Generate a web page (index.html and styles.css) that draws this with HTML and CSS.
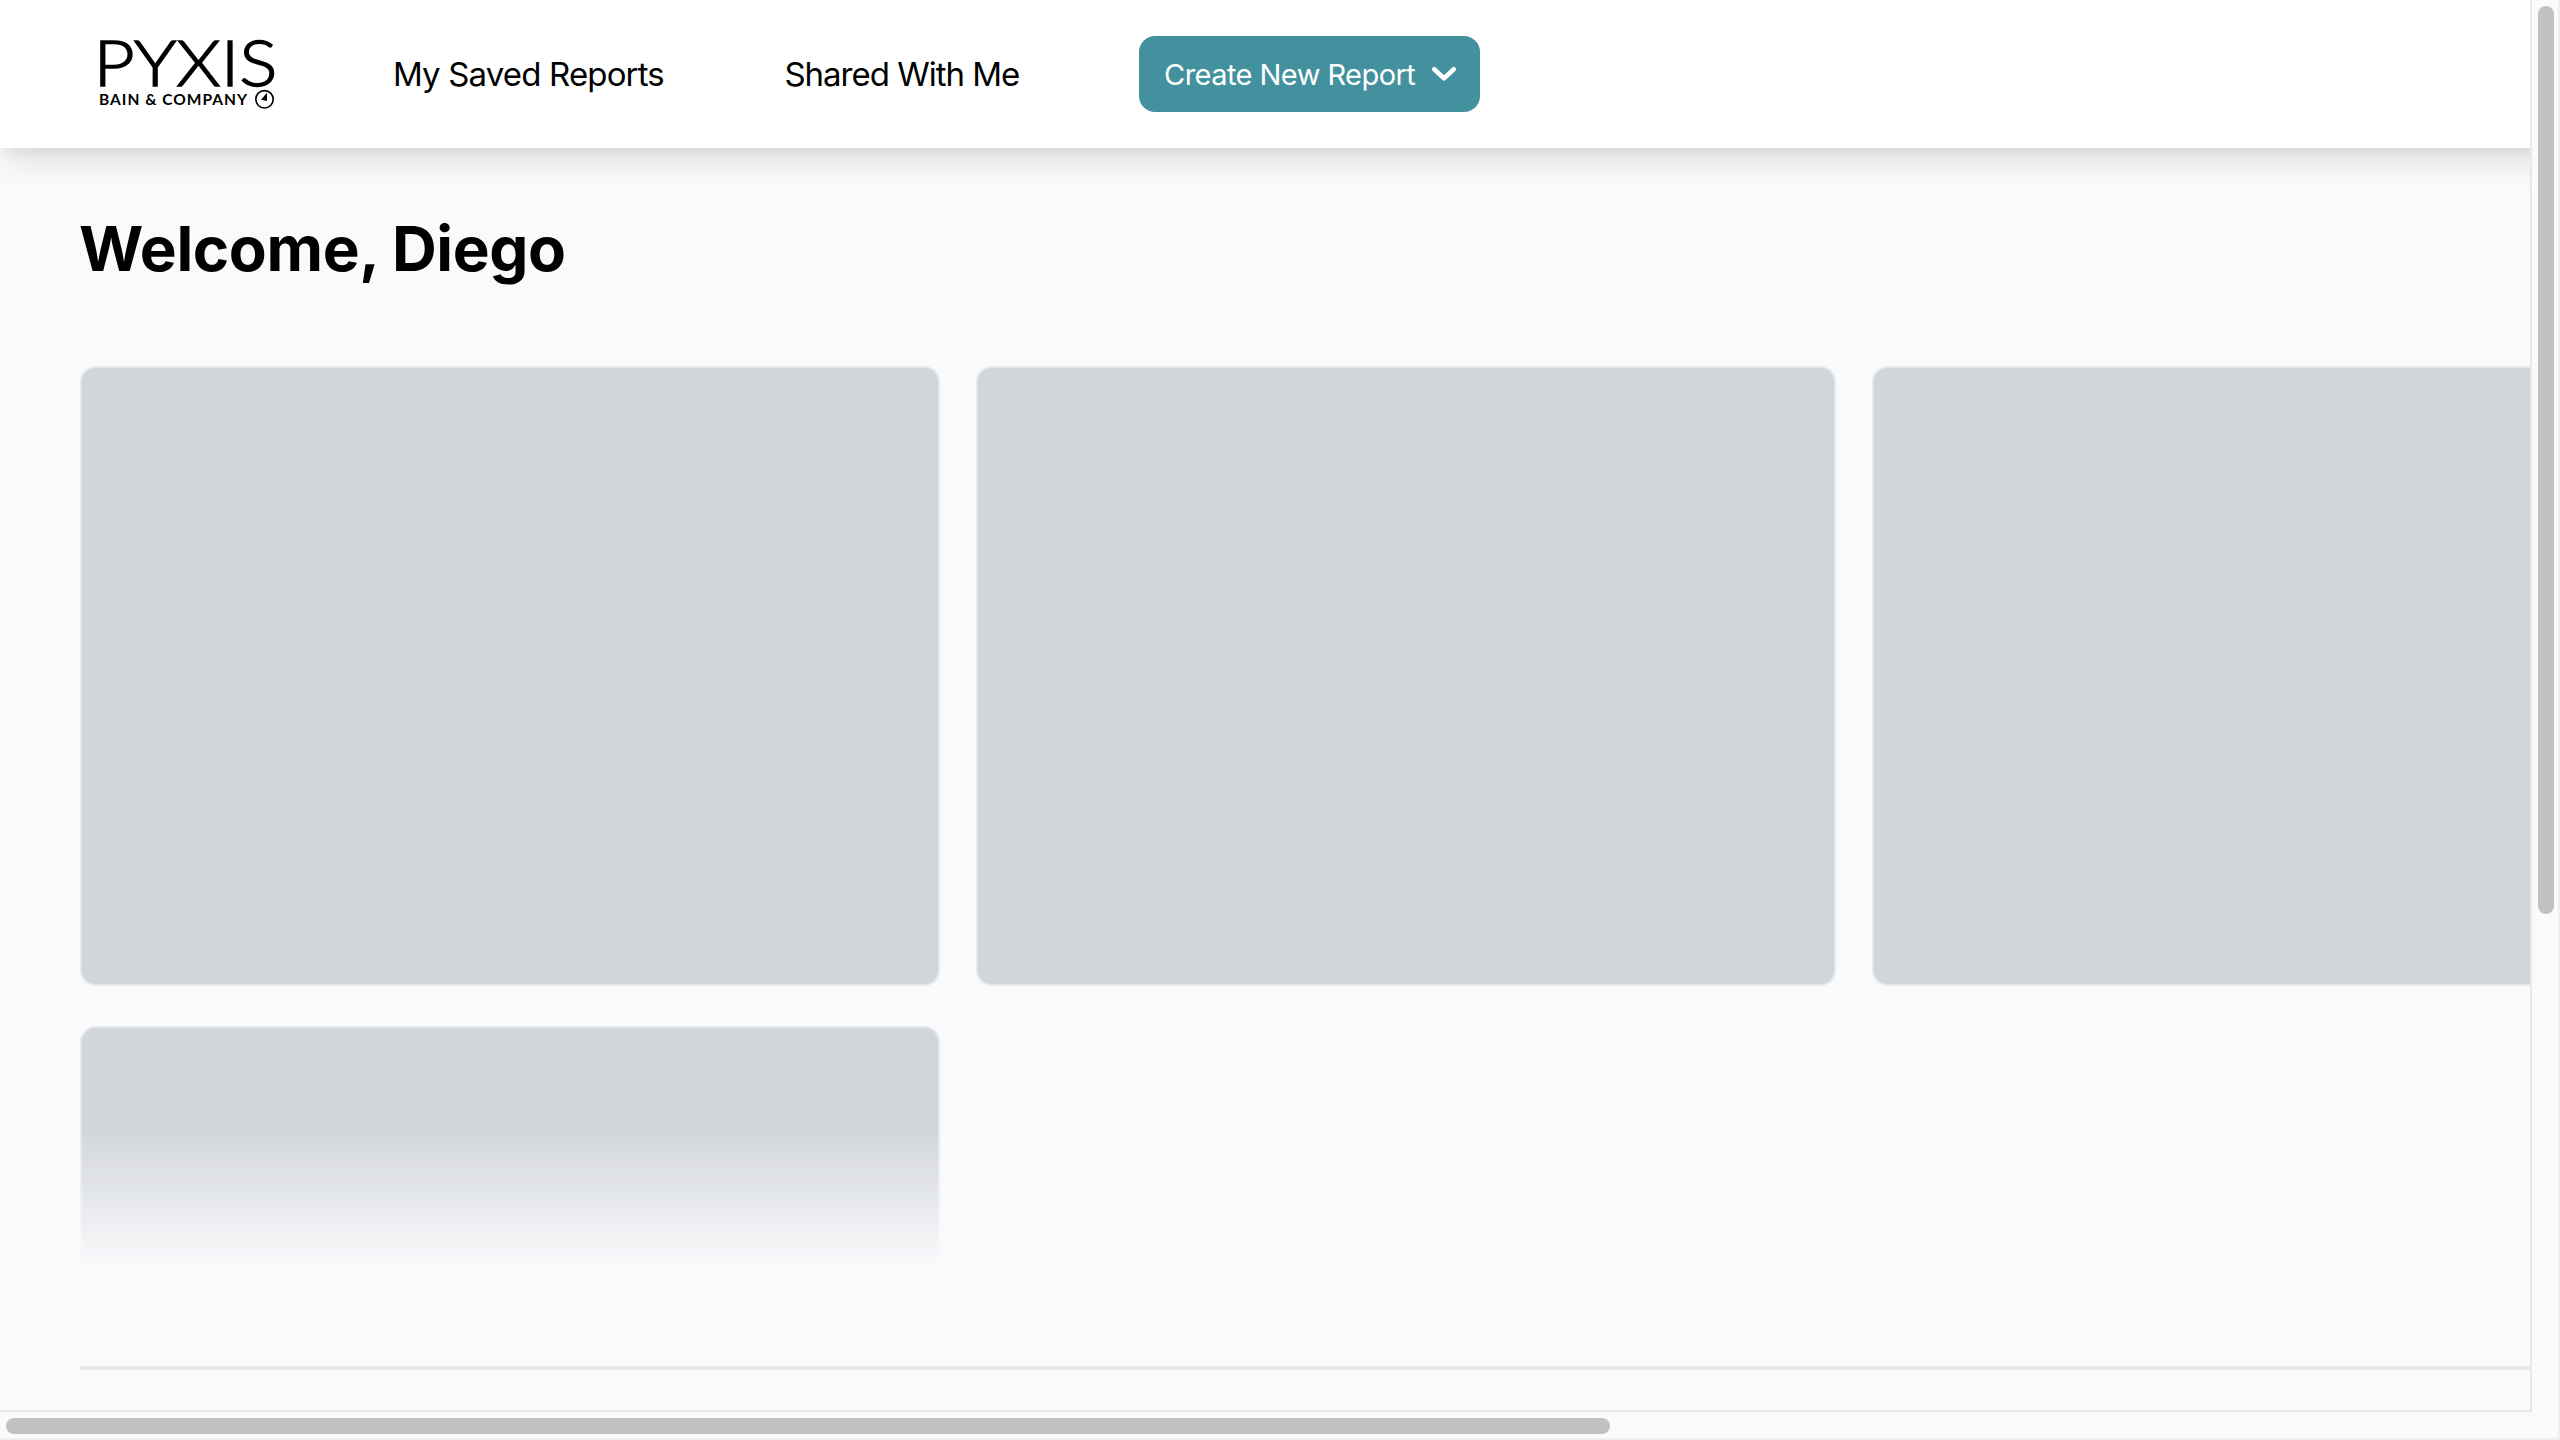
FILE: index.html
```html
<!DOCTYPE html>
<html lang="en">
<head>
<meta charset="utf-8">
<title>Pyxis</title>
<link rel="stylesheet" href="styles.css">
</head>
<body>
<div class="window">
  <div class="viewport">
    <header class="topbar">
      <svg class="logo" viewBox="0 0 180 76" role="img" aria-label="Pyxis, Bain &amp; Company">
        <text class="logo-name" x="-6.500" y="49.500" textLength="184" lengthAdjust="spacingAndGlyphs">PYXIS</text>
        <text class="logo-owner" x="-1" y="69" textLength="148" lengthAdjust="spacing">BAIN &amp; COMPANY</text>
        <circle class="logo-ring" cx="164.5" cy="63.3" r="8.7"/>
        <path class="logo-needle" d="M167 56.8V65l-6-1.2z"/>
      </svg>
      <nav class="nav">
        <a class="nav-link nav-saved">My Saved Reports</a>
        <a class="nav-link nav-shared">Shared With Me</a>
      </nav>
      <button class="create" type="button">
        <span class="create-label">Create New Report</span>
        <svg class="chevron" viewBox="0 0 24 14"><path d="M2.2 2.2L12 11.4l9.800-9.200"/></svg>
      </button>
    </header>
    <main class="content">
      <h1 class="welcome">Welcome, Diego</h1>
      <section class="cards">
        <div class="card"></div>
        <div class="card"></div>
        <div class="card"></div>
        <div class="card"></div>
      </section>
      <hr class="rule">
    </main>
  </div>
  <div class="track track-y"><div class="thumb thumb-y"></div></div>
  <div class="track track-x"><div class="thumb thumb-x"></div></div>
  <div class="corner"></div>
</div>
</body>
</html>
```
FILE: styles.css
```css
* { box-sizing: border-box; }
body { margin: 0; background: #fafafa; font-family: Inter, "Liberation Sans", sans-serif; color: #000; overflow: hidden; }
.window { width: 2560px; height: 1440px; display: grid; grid-template-columns: 2530px 30px; grid-template-rows: 1410px 30px; overflow: hidden; }
.viewport { overflow: hidden; background: #f9fafc; }

.topbar { position: relative; width: 2800px; height: 148px; padding-left: 100px; display: flex; align-items: center; background: #fff; box-shadow: 0 20px 30px -6px rgba(0, 0, 0, .1), 0 8px 12px -4px rgba(0, 0, 0, .06); }
.logo { width: 180px; height: 76px; flex: none; overflow: visible; }
.logo-name { font: 300 64px Lato, sans-serif; stroke: #000; stroke-width: 1.400; }
.logo-owner { font: 700 15.500px Lato, sans-serif; }
.logo-ring { fill: none; stroke: #000; stroke-width: 1.600; }
.nav { display: flex; gap: 120.500px; margin-left: 113px; width: 746px; }
.nav-link { font-size: 33px; line-height: 44px; white-space: nowrap; }
.nav-saved { letter-spacing: -.85px; }
.nav-shared { letter-spacing: -1px; }
.create { width: 341px; height: 76px; padding: 0 24px 0 25px; display: flex; align-items: center; justify-content: space-between; border: 0; border-radius: 16px; background: #43919e; color: #fff; font-family: inherit; }
.create-label { font-size: 29px; line-height: 40px; padding-top: 2px; letter-spacing: -.55px; white-space: nowrap; }
.chevron { width: 24px; height: 14px; flex: none; overflow: visible; }
.chevron path { fill: none; stroke: #fff; stroke-width: 4.600; stroke-linecap: round; stroke-linejoin: round; }

.content { padding: 62px 0 0 80px; }
.welcome { margin: 0 0 0 -1px; height: 156px; font-size: 62px; line-height: 78px; font-weight: 700; letter-spacing: -.4px; white-space: nowrap; }
.cards { width: 2652px; height: 898px; display: grid; grid-template-columns: repeat(3, 860px); grid-auto-rows: 620px; gap: 40px 36px; overflow: hidden; -webkit-mask-image: linear-gradient(#000 766px, transparent 898px); mask-image: linear-gradient(#000 766px, transparent 898px); }
.card { border: 2px solid #e5e7eb; border-radius: 16px; background: #d2d5da; }
.rule { width: 2652px; height: 4px; margin: 102px 0 0; border: 0; background: #e5e7eb; }

.track { background: #fafafa; }
.track-y { border-left: 2px solid #e8e8e8; border-right: 2px solid #ededed; padding: 6px; }
.track-x { border-top: 2px solid #e8e8e8; border-bottom: 2px solid #ededed; padding: 6px; }
.thumb { border-radius: 8px; background: #c1c1c1; }
.thumb-y { width: 16px; height: 908px; }
.thumb-x { width: 1604px; height: 16px; }
.corner { border-right: 2px solid #ededed; border-bottom: 2px solid #ededed; background: linear-gradient(#e8e8e8, #e8e8e8) 0 0 / 2px 2px no-repeat #fafafa; }
```
